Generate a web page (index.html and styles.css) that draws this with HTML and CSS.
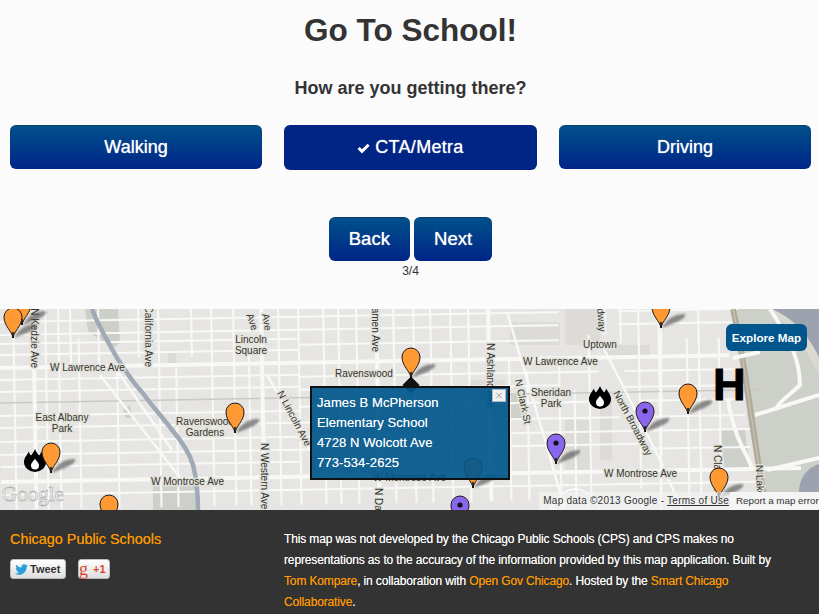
FILE: index.html
```html
<!DOCTYPE html>
<html lang="en">
<head>
<meta charset="utf-8">
<title>Go To School!</title>
<link rel="stylesheet" href="styles.css">
</head>
<body>
<main class="wizard">
  <h1 class="title">Go To School!</h1>
  <h2 class="question">How are you getting there?</h2>
  <div class="choices">
    <a class="btn btn-wide">Walking</a>
    <a class="btn btn-wide btn-active"><svg class="check" viewBox="0 0 12 10"><path d="M0.5 5.5 L2.5 3.5 L4.6 5.6 L9.8 0.5 L11.7 2.4 L4.6 9.5Z"/></svg>CTA/Metra</a>
    <a class="btn btn-wide">Driving</a>
  </div>
  <div class="nav">
    <a class="btn btn-nav">Back</a>
    <a class="btn btn-nav">Next</a>
  </div>
  <div class="step">3/4</div>
</main>

<section class="map">
  <svg class="map-canvas" viewBox="0 309 819 201" width="819" height="201">
    <defs>
      <g id="pin-o">
        <path class="pin-shadow" d="M1 0 C5 -8 12 -14 24 -14 C26 -9 14 -5 1 0Z"/>
        <path class="pin-orange" d="M0 0 C-1 -7 -9 -12 -9 -21 A9 9 0 1 1 9 -21 C9 -12 1 -7 0 0Z"/>
        <path class="pin-stem" d="M0 -6V0"/>
      </g>
      <g id="pin-p">
        <path class="pin-shadow" d="M1 0 C5 -8 12 -14 24 -14 C26 -9 14 -5 1 0Z"/>
        <path class="pin-purple" d="M0 0 C-1 -7 -9 -12 -9 -21 A9 9 0 1 1 9 -21 C9 -12 1 -7 0 0Z"/>
        <circle class="pin-dot" cx="0" cy="-21" r="2.6"/>
        <path class="pin-stem" d="M0 -6V0"/>
      </g>
      <g id="flame">
        <path class="flame-outer" d="M11 0 C12 3 14 5 15 6.500 C16 5.500 17 4 17 2.500 C19 6 22 9 22 13 A11 10 0 0 1 0 13 C0 9 3 6 5 2.500 C5 4 6 5.500 7 6.500 C8 5 10 3 11 0Z"/>
        <path class="flame-inner" d="M11 9.500 C12 12 15 13.500 15 16.500 A4 4 0 0 1 7 16.500 C7 13.500 10 12 11 9.500Z"/>
      </g>
    </defs>

    <rect class="land" x="0" y="309" width="819" height="201"/>
    <path class="block" d="M565 309H600V345H565Z M510 322H560V345H510Z M600 395H612V460H600Z M565 420H590V470H565Z M168 352H176V364H168Z M605 345H650V357H605Z M470 380H505V395H470Z"/>
    <path class="park" d="M85 309H118L120 342L114 348L88 332Z M153 483H197V510H153Z M123 410L130 405L133 418L126 418Z M735 309H770C795 325 805 350 819 373V510H765L748 420Z M505 395H525L530 420H510Z M720 430H745L750 470H725Z"/>
    <path class="sand" d="M765 309H790C805 325 812 345 819 355V375C805 350 795 325 765 309Z"/>
    <path class="lake" d="M772 309H819V357C810 340 800 322 772 309Z M819 464C800 470 795 490 802 510H819Z"/>

    <g class="grid" transform="rotate(-1 0 420)">
      <path class="st" d="M0 322H300M0 335H300M0 344H300M0 355H300M0 380H300M0 392H300M0 416H300M0 428H300M0 442H300M0 455H300M0 467H300M0 495H300
        M300 322H560M300 335H560M300 350H560M300 382H600M300 395H560M300 412H600M300 428H620M300 442H640M300 455H640M300 495H640
        M620 322H740M620 335H740M625 382H740M625 398H745M640 412H745M640 428H745M640 442H750M640 460H750M640 495H760"/>
      <path class="st" d="M15 309V510M47 309V510M60 309V510M72 309V368M80 340V510M100 309V370M118 375V510M140 309V360M160 309V510M177 370V510M193 309V360M213 309V510M235 309V510M250 355V510M280 309V510M300 309V510
        M325 309V510M340 309V510M358 309V510M395 309V510M415 309V510M432 309V510M452 309V510M470 309V510M510 370V510M528 380V510M560 370V510M575 400V510M590 345V510
        M622 309V355M640 309V500M660 309V510M688 350V510M700 309V510M720 350V510"/>
      <path class="rail" d="M0 403H760"/>
      <path class="main" d="M0 368H730M0 482H800M35 309V510M263 309V510M378 309V510M490 309V510M606 309V345"/>
    </g>
    <path class="mid" d="M100 375 L182 480 M118 372 L172 450 M267 375 L310 450 M507 312 L545 440 L565 510 M602 345 L625 390 L660 460 L682 510 M661 309 L661 510"/>
    <path class="river" d="M92 309 C100 330 110 345 117 358 C128 375 135 385 142 392 C155 410 165 420 172 430 C185 445 190 455 193 465 C197 480 198 495 198 510"/>
    <path class="tan" d="M733 309 C745 360 752 430 766 510"/>
    <path class="tan-line" d="M733 309 C745 360 752 430 766 510"/>
    <path class="main" d="M733 358 L760 352 M755 415 L819 395 M767 470 L819 458 M770 309 C790 340 800 360 800 385 C790 395 780 400 775 410 M728 400 C735 440 745 450 753 470"/>
    <path class="thin" d="M550 510 C565 480 590 485 600 510 M560 510 C570 495 585 495 590 510"/>

    <g class="labels">
      <text x="50" y="371">W Lawrence Ave</text>
      <text x="523" y="365">W Lawrence Ave</text>
      <text x="151" y="485">W Montrose Ave</text>
      <text x="604" y="477">W Montrose Ave</text>
      <text x="373" y="481">W Montrose Ave</text>
      <text class="mid-anchor" x="251" y="343">Lincoln</text>
      <text class="mid-anchor" x="251" y="354">Square</text>
      <text class="mid-anchor" x="62" y="421">East Albany</text>
      <text class="mid-anchor" x="62" y="432">Park</text>
      <text class="mid-anchor" x="205" y="425">Ravenswood</text>
      <text class="mid-anchor" x="205" y="436">Gardens</text>
      <text x="335" y="377">Ravenswood</text>
      <text class="mid-anchor" x="551" y="396">Sheridan</text>
      <text class="mid-anchor" x="551" y="407">Park</text>
      <text x="583" y="348">Uptown</text>
      <text class="end-anchor" transform="translate(31 368) rotate(90)">N Kedzie Ave</text>
      <text class="end-anchor" transform="translate(145 367) rotate(90)">California Ave</text>
      <text class="end-anchor" transform="translate(372 352) rotate(90)">N Damen Ave</text>
      <text transform="translate(487 343) rotate(90)">N Ashland Ave</text>
      <text transform="translate(261 443) rotate(90)">N Western Ave</text>
      <text transform="translate(375 488) rotate(90)">N Damen Ave</text>
      <text transform="translate(714 445) rotate(90)">N Clark St</text>
      <text transform="translate(756 465) rotate(88)">N Lake Shore Dr</text>
      <text transform="translate(277 393) rotate(62)">N Lincoln Ave</text>
      <text transform="translate(515 380) rotate(78)">N Clark St</text>
      <text transform="translate(613 393) rotate(62)">North Broadway</text>
      <text class="end-anchor" transform="translate(252 331) rotate(70)">Ave</text>
      <text class="end-anchor" transform="translate(265 331) rotate(80)">Ave</text>
      <text class="end-anchor" transform="translate(599 332) rotate(85)">Broadway</text>
    </g>

    <text class="google" x="2" y="501">Google</text>

    <g class="flames">
      <use href="#pin-o" x="22" y="325"/>
      <use href="#pin-o" x="13" y="338"/>
      <use href="#pin-o" x="235" y="433"/>
      <use href="#flame" x="24" y="449"/>
      <use href="#pin-o" x="51" y="473"/>
      <use href="#pin-o" x="109" y="525"/>
      <use href="#pin-o" x="411" y="378"/>
      <use href="#pin-o" x="473" y="488"/>
      <use href="#pin-p" x="460" y="526"/>
      <use href="#pin-p" x="556" y="464"/>
      <use href="#pin-p" x="645" y="432"/>
      <use href="#pin-o" x="661" y="328"/>
      <use href="#pin-o" x="688" y="414"/>
      <use href="#pin-o" x="719" y="498"/>
      <use href="#flame" x="589" y="386"/>
    </g>
    <text class="hospital" x="713" y="400">H</text>
  </svg>

  <div class="marker-tip"></div>
  <div class="popup">
    <button class="popup-close"><svg viewBox="0 0 10 10"><path d="M1 1L9 9M9 1L1 9"/></svg></button>
    James B McPherson<br>Elementary School<br>4728 N Wolcott Ave<br>773-534-2625
  </div>
  <a class="explore">Explore Map</a>
  <div class="attribution">
    <span class="attr-data">Map data ©2013 Google - <u>Terms of Use</u></span><span class="attr-report">Report a map error</span>
  </div>
</section>

<footer class="footer">
  <div class="footer-left">
    <a class="footer-title">Chicago Public Schools</a>
    <div class="social">
      <a class="social-btn tweet"><svg class="bird" viewBox="0 0 16 13"><path d="M16 1.600C15.400 1.900 14.800 2 14.100 2.100C14.800 1.700 15.300 1 15.500 .3C14.900 .7 14.200 .9 13.500 1.100C12.900 .4 12.100 0 11.200 0C9.400 0 8 1.500 8 3.200C8 3.500 8 3.700 8.100 3.900C5.400 3.800 3 2.500 1.400 .6C1.100 1.100 1 1.600 1 2.200C1 3.300 1.500 4.300 2.400 4.900C1.900 4.900 1.400 4.700 .9 4.500C.9 6.100 2 7.400 3.500 7.700C3 7.900 2.600 7.900 2.100 7.800C2.500 9.100 3.700 10 5.100 10.100C3.700 11.200 1.800 11.700 0 11.500C1.400 12.400 3.100 13 5 13C11 13 14.300 8 14.300 3.700V3.300C15 2.800 15.500 2.200 16 1.600Z"/></svg>Tweet</a>
      <a class="social-btn gplus"><span class="g">g</span><span class="plus">+1</span></a>
    </div>
  </div>
  <p class="footer-text">This map was not developed by the Chicago Public Schools (CPS) and CPS makes no representations as to the accuracy of the information provided by this map application. Built by <a>Tom Kompare</a>, in collaboration with <a>Open Gov Chicago</a>. Hosted by the <a>Smart Chicago Collaborative</a>.</p>
</footer>
</body>
</html>
```
FILE: styles.css
```css
* { box-sizing: border-box; }
html, body { margin: 0; padding: 0; }
body {
  width: 819px;
  height: 614px;
  overflow: hidden;
  background: #fbfbfc;
  color: #333;
  font-family: "Liberation Sans", Arial, sans-serif;
}
.wizard {
  height: 309px;
  padding: 0 8px 0 10px;
  text-align: center;
}
.title {
  margin: 0;
  padding-top: 10px;
  font-size: 31.5px;
  line-height: 40px;
  font-weight: bold;
}
.question {
  margin: 27px 0 0;
  font-size: 18px;
  line-height: 22px;
  font-weight: bold;
}
.choices {
  display: grid;
  grid-template-columns: 252px 253px 252px;
  column-gap: 22px;
  align-items: start;
  margin-top: 26px;
}
.btn {
  display: block;
  height: 44px;
  border-radius: 6px;
  color: #fff;
  font-size: 18px;
  line-height: 42px;
  text-shadow: 0 0 1px rgba(255, 255, 255, .8);
  background: linear-gradient(#00508a, #002588);
  border-top: 1px solid #0a3d6e;
}
.btn-active {
  height: 45px;
  background: #002585;
  border-top: 0;
  line-height: 45px;
  letter-spacing: .3px;
}
.check {
  width: 13px;
  height: 11px;
  margin-right: 5px;
  vertical-align: -1px;
  fill: #fff;
}
.nav {
  display: flex;
  justify-content: center;
  gap: 4px;
  margin-top: 47px;
}
.btn-nav {
  padding: 0 20px;
  font-size: 18.6px;
}
.step {
  margin-top: 3px;
  font-size: 12px;
  line-height: 15px;
  color: #333;
}

.map {
  position: relative;
  height: 201px;
  overflow: hidden;
  background: #e6e5e3;
}
.map-canvas { display: block; }
.land { fill: #e6e5e3; }
.block { fill: #dcdbd8; }
.park { fill: #cdd0c8; }
.sand { fill: #dad8cf; }
.lake { fill: #9ca3ae; }
.river { fill: none; stroke: #a0a9b6; stroke-width: 4.500; }
.st { fill: none; stroke: #f8f8f7; stroke-width: 2; }
.rail { fill: none; stroke: #c9c9c6; stroke-width: 1.500; }
.main { fill: none; stroke: #f8f8f7; stroke-width: 4; }
.mid { fill: none; stroke: #f8f8f7; stroke-width: 2.500; }
.tan { fill: none; stroke: #b3ab9a; stroke-width: 6; }
.tan-line { fill: none; stroke: #c9c6b9; stroke-width: 1; }
.thin { fill: none; stroke: #fff; stroke-width: 1.500; }
.labels text {
  font-family: "Liberation Sans", Arial, sans-serif;
  font-size: 10px;
  fill: #333330;
  stroke: #e4e3da;
  stroke-width: 3px;
  stroke-opacity: .9;
  paint-order: stroke;
}
.labels .mid-anchor { text-anchor: middle; }
.labels .end-anchor { text-anchor: end; }
.google {
  font-family: "Liberation Serif", serif;
  font-size: 21px;
  fill: #f7f7f5;
  stroke: #a0a09e;
  stroke-width: .5px;
}
.pin-shadow { fill: #555; opacity: .65; filter: blur(.8px); }
.pin-orange { fill: #ff9933; stroke: #1c1a18; stroke-width: 1; }
.pin-purple { fill: #8a66ee; stroke: #1c1a18; stroke-width: 1; }
.pin-dot { fill: #111; }
.pin-stem { stroke: #111; stroke-width: 1.500; fill: none; }
.flame-outer { fill: #000; }
.flame-inner { fill: #fff; }
.hospital {
  font-family: "Liberation Sans", Arial, sans-serif;
  font-size: 45px;
  font-weight: bold;
  fill: #000;
  stroke: #000;
  stroke-width: 1px;
}
.marker-tip {
  position: absolute;
  left: 405px;
  top: 70px;
  width: 12px;
  height: 12px;
  background: #111;
  transform: rotate(45deg);
}
.popup {
  position: absolute;
  left: 310px;
  top: 77px;
  width: 200px;
  height: 94px;
  padding: 5px 0 0 5px;
  border: 2px solid #111;
  background: rgba(0, 86, 140, .92);
  color: #fff;
  font-size: 13px;
  line-height: 20px;
  letter-spacing: .1px;
  text-shadow: 0 0 .5px rgba(255, 255, 255, .7);
}
.popup-close {
  position: absolute;
  top: 1px;
  right: 2px;
  width: 14px;
  height: 13px;
  padding: 2px;
  border: 1px solid #aeb9c4;
  background: #f2f2f2;
}
.popup-close svg {
  display: block;
  width: 100%;
  height: 100%;
  fill: none;
  stroke: #888;
  stroke-width: 1.200;
}
.explore {
  position: absolute;
  left: 726px;
  top: 15px;
  width: 81px;
  height: 27px;
  border-radius: 6px;
  background: #00558c;
  color: #fff;
  font-size: 11.7px;
  font-weight: bold;
  line-height: 27px;
  text-align: center;
}
.attribution {
  position: absolute;
  right: 0;
  bottom: 0;
  display: flex;
  height: 18px;
  font-size: 10px;
  line-height: 18px;
  color: #333;
}
.attr-data {
  padding: 0 1px 0 4px;
  background: rgba(245, 245, 245, .65);
  letter-spacing: .25px;
}
.attr-report {
  padding-left: 6px;
  width: 89px;
  white-space: nowrap;
  background: #f5f5f5;
  font-size: 9.8px;
}

.footer {
  display: grid;
  grid-template-columns: 274px 500px;
  height: 104px;
  padding: 0 10px;
  overflow: hidden;
  background: #333;
}
.footer-title {
  display: block;
  margin-top: 21px;
  font-size: 14.4px;
  line-height: 17px;
  color: #f90;
  text-shadow: 0 0 .5px rgba(255, 153, 0, .8);
}
.social {
  display: flex;
  gap: 12px;
  margin-top: 11px;
}
.social-btn {
  display: flex;
  align-items: center;
  height: 20px;
  border-radius: 3px;
  border: 1px solid #bbb;
  background: linear-gradient(#fff, #dedede);
  font-size: 11px;
  font-weight: bold;
}
.tweet {
  width: 56px;
  padding-left: 4px;
  gap: 2px;
  color: #333;
}
.bird {
  width: 13px;
  height: 11px;
  fill: #2a9fd8;
}
.gplus {
  width: 32px;
  color: #d9492e;
}
.g {
  font-family: "Liberation Serif", serif;
  font-size: 18px;
  font-weight: normal;
  line-height: 16px;
  margin-right: 5px;
}
.footer-text {
  margin: 19px 0 0;
  font-size: 12px;
  line-height: 21px;
  letter-spacing: -.14px;
  color: #fff;
  text-shadow: 0 0 .6px rgba(255, 255, 255, .7);
}
.footer-text a {
  color: #f90;
  text-shadow: 0 0 .6px rgba(255, 153, 0, .7);
}
```
